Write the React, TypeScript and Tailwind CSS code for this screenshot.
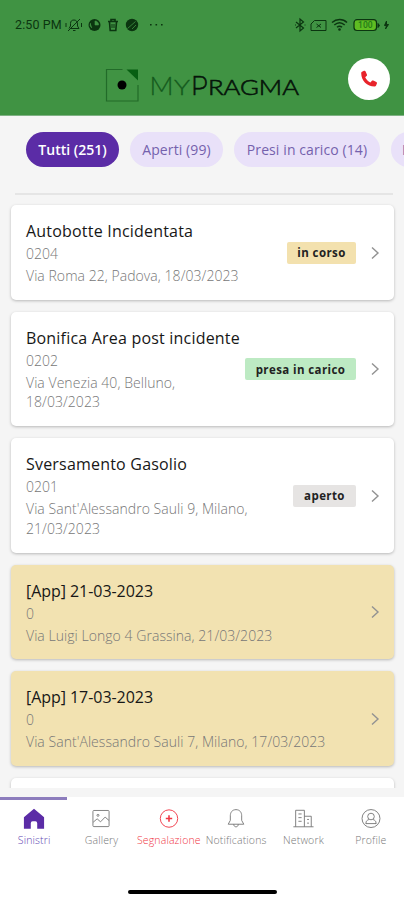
import { useState } from 'react';
import type { ReactNode } from 'react';
import clsx from 'clsx';

type ClaimStatus = 'in corso' | 'presa in carico' | 'aperto';

interface Claim {
  title: string;
  code: string;
  address: string[];
  status?: ClaimStatus;
}

const FILTERS = [
  { label: 'Tutti (251)', size: 'w-[93px]' },
  { label: 'Aperti (99)', size: 'w-[93px]' },
  { label: 'Presi in carico (14)', size: 'w-[146px]' },
  { label: 'I', size: 'w-[110px] pl-[11px] text-left' }
];

const CLAIMS: Claim[] = [
  { title: 'Autobotte Incidentata', code: '0204', address: ['Via Roma 22, Padova, 18/03/2023'], status: 'in corso' },
  { title: 'Bonifica Area post incidente', code: '0202', address: ['Via Venezia 40, Belluno,', '18/03/2023'], status: 'presa in carico' },
  { title: 'Sversamento Gasolio', code: '0201', address: ["Via Sant'Alessandro Sauli 9, Milano,", '21/03/2023'], status: 'aperto' },
  { title: '[App] 21-03-2023', code: '0', address: ['Via Luigi Longo 4 Grassina, 21/03/2023'] },
  { title: '[App] 17-03-2023', code: '0', address: ["Via Sant'Alessandro Sauli 7, Milano, 17/03/2023"] }
];

const STATUS_STYLES: Record<ClaimStatus, string> = {
  'in corso': 'bg-[#f3e1ae] w-[69px]',
  'presa in carico': 'bg-[#bdeac3] w-[111px]',
  aperto: 'bg-[#e6e4e3] w-[63px]'
};

const TABS: { label: string; icon: ReactNode; color: string }[] = [
  {
    label: 'Sinistri',
    color: 'text-[#6248b3]',
    icon: (
      <path d="M1 10.2 12 .8l11 9.4V22.500h-7.500v-6a2 2 0 0 0-2-2h-3a2 2 0 0 0-2 2v6H1z" fill="#5b2ca6" stroke="none" />
    )
  },
  {
    label: 'Gallery',
    color: 'text-[#777]',
    icon: (
      <>
        <rect x="3.2" y="2.7" width="17.6" height="17.6" rx="1" />
        <circle cx="8.7" cy="8" r="1.1" />
        <path d="m3.500 15.500 4.300-3.700 3.700 3.300 5-5.200 4.300 3.800" />
      </>
    )
  },
  {
    label: 'Segnalazione',
    color: 'text-[#f03644]',
    icon: (
      <>
        <circle cx="12" cy="11.500" r="9.500" />
        <path d="M12 8v7M8.500 11.500h7" strokeWidth="1.700" />
      </>
    )
  },
  {
    label: 'Notifications',
    color: 'text-[#777]',
    icon: (
      <path d="M12 1.800c-4 0-6.200 2.800-6.200 6.700v5l-2.300 4.200h17l-2.300-4.200v-5C18.200 4.600 16 1.800 12 1.800ZM9.500 17.700c0 3.800 5 3.800 5 0" />
    )
  },
  {
    label: 'Network',
    color: 'text-[#777]',
    icon: (
      <path d="M1.500 20.500h22M4 20.500V2.500h9.500v18M13.500 9h7.500v11.500M7 6.500h3.500M7 10.500h3.500M7 14.500h3.500M16.500 12.500h2M16.500 16.500h2" />
    )
  },
  {
    label: 'Profile',
    color: 'text-[#777]',
    icon: (
      <>
        <circle cx="12" cy="11.500" r="9.800" />
        <circle cx="12" cy="9.300" r="3.600" />
        <path d="M6.500 17.500v-1c0-2.200 1.300-3.300 3.200-3.900M17.500 17.500v-1c0-2.200-1.300-3.300-3.200-3.900M6.500 17h11" />
      </>
    )
  }
];

function StatusBar() {
  return (
    <div className="flex h-[50px] items-center pl-[15px] pr-3 text-[#0b3510]">
      <span className="w-[50px] whitespace-nowrap font-['Roboto'] text-[12.5px] tracking-[0.1px]">2:50 PM</span>
      <svg width="98" height="16" viewBox="0 0 98 16" fill="none" stroke="currentColor">
        {/* muted bell */}
        <path d="M4 11.500 5.500 9V6.500C5.500 4 7 3 9 3s3.500 1.500 3.500 4v2l1.500 2.500H6M8 13.500h2.500M3 14 15 2M1 6v4M16.500 6v4" />
        <circle cx="29.500" cy="8" r="6" fill="currentColor" stroke="none" />
        <path d="M27 11a4 4 0 0 1-1.500-5M30 4v4h3.500a3.500 3.500 0 0 0-3.500-4Z" stroke="#409343" fill="#409343" strokeWidth=".6" />
        <path d="M43 4.500h10M46 4V2.500h4V4M44.500 5l.7 8.500h5.600l.7-8.500" strokeWidth="1.600" />
        <path d="M47 7v4M49 7v4" />
        <circle cx="67" cy="8" r="6.200" fill="currentColor" stroke="none" />
        <path d="m62.500 11.500 8-7M67 12l4-4" stroke="#409343" strokeWidth=".8" />
        <path d="M85 7.700h1.600M90.500 7.700h1.600M96 7.700h1.600" strokeWidth="1.600" />
      </svg>
      <svg className="ml-auto" width="98" height="16" viewBox="0 0 98 16" fill="none" stroke="currentColor">
        <path d="m2 5 7.500 6L6 14V2l3.500 3L2 11M1 8h1M10.500 8h1" strokeWidth="1.200" />
        <path d="M20.500 3.500h11.500v10h-15V7zM22.500 7l4.500 3.500M27 7l-4.500 3.500" />
        <path d="M38 5.500c4.500-4 11-4 15 0M40.300 8c3.200-2.800 7.300-2.800 10.400 0M43 10.300c1.600-1.400 3.500-1.400 5 0" strokeWidth="1.500" />
        <circle cx="45.500" cy="12.500" r="1.300" fill="currentColor" stroke="none" />
        <rect x="60" y="2.700" width="22.500" height="10.800" rx="3" fill="#5fbd22" strokeWidth="1.200" />
        <path d="M84 6.500v4l1.500-2z" fill="currentColor" />
        <text x="71.300" y="11.200" textAnchor="middle" fontSize="8.500" fontWeight="500" fontFamily="Roboto" fill="#1f7a18" stroke="none">100</text>
        <path d="m92.500 4-2 4.500h2L91.500 12l3-4.500h-2z" fill="currentColor" />
      </svg>
    </div>
  );
}

function Header() {
  return (
    <header className="h-[116px] shrink-0 border-b border-[#7fb184] bg-[#409343]">
      <StatusBar />
      <div className="flex items-start pl-[105px] pt-2">
        <svg className="mt-[10px]" width="196" height="36" viewBox="0 0 196 36">
          <path d="M17.500 1.500H1.500v31.500h31.500V17" fill="none" stroke="#226b29" strokeWidth="1.200" />
          <path d="M21.500 1.500H33v11z" fill="#075f12" />
          <circle cx="17" cy="17" r="4.500" fill="#000" />
          <text y="26.500" fontFamily="Lato" fontWeight="300" fill="#14591d" stroke="#14591d" strokeWidth=".3">
            <tspan x="44.500" fontSize="25.500" textLength="24" lengthAdjust="spacingAndGlyphs">M</tspan>
          </text>
          <text x="69" y="26.500" fontFamily="Lato" fontWeight="300" fontSize="22" fill="#14591d" stroke="#14591d" strokeWidth=".3" textLength="16" lengthAdjust="spacingAndGlyphs">Y</text>
          <text x="86" y="26.500" fontFamily="Montserrat, Lato" fontSize="26" fontWeight="300" fill="#06150a" stroke="#06150a" strokeWidth=".6" textLength="17" lengthAdjust="spacingAndGlyphs">P</text>
          <text x="103" y="26.500" fontFamily="Lato" fontSize="21.500" fontWeight="300" fill="#06150a" stroke="#06150a" strokeWidth=".6" textLength="91" lengthAdjust="spacingAndGlyphs">RAGMA</text>
        </svg>
        <button aria-label="Chiama" className="ml-[47px] flex size-[42px] items-center justify-center rounded-full bg-white">
          <svg width="18" height="18" viewBox="0 0 18 18" fill="#e8232b">
            <path d="M2 1.800 4 .8c.7-.3 1.300 0 1.600.6l1.300 3c.3.700.1 1.200-.4 1.700L5.200 7.200c1 2.300 2.700 4 5.200 5.200l1.300-1.500c.4-.5 1-.6 1.600-.3l3 1.400c.6.300.9.900.6 1.600l-.8 2c-.3.700-.8 1-1.500 1C7 16.500 1.300 10.500 1.200 3.200c0-.6.200-1.100.8-1.400Z" />
          </svg>
        </button>
      </div>
    </header>
  );
}

function ClaimCard({ claim }: { claim: Claim }) {
  return (
    <article
      className={clsx(
        'flex shrink-0 items-center rounded-[5px] pb-[14px] pl-[15px] pr-[13px] pt-[15px] shadow-[0_1px_3px_rgba(0,0,0,0.25)]',
        claim.status ? 'bg-white' : 'bg-[#f2e2b1]'
      )}
    >
      <div className="min-w-0 flex-1 whitespace-nowrap">
        <h2
          className={clsx(
            'text-[16px] leading-[22px] text-[#171717]',
            claim.status ? 'tracking-[0.2px]' : 'tracking-[-0.05px]'
          )}
        >
          {claim.title}
        </h2>
        <p className="mt-[2px] text-[14px] font-light leading-[20px] text-[#777]">{claim.code}</p>
        <div className="mt-[2px] text-[14px] font-light leading-[19.700px] tracking-[0.050px] text-[#777]">
          {claim.address.map(line => (
            <p key={line}>{line}</p>
          ))}
        </div>
      </div>
      {claim.status && (
        <span
          className={clsx(
            'flex h-[22px] shrink-0 items-center justify-center whitespace-nowrap rounded-[2px] text-[11.500px] font-bold tracking-[0.400px] text-[#222]',
            STATUS_STYLES[claim.status]
          )}
        >
          {claim.status}
        </span>
      )}
      <svg className="ml-[14px] shrink-0" width="11" height="14" viewBox="0 0 11 14" fill="none" stroke="#929292" strokeWidth="1.400">
        <path d="m2 1.500 6 5.500-6 5.500" />
      </svg>
    </article>
  );
}

export default function App() {
  const [filter, setFilter] = useState(0);
  const [tab, setTab] = useState(0);

  return (
    <div className="flex h-[900px] w-[404px] flex-col overflow-hidden bg-[#f5f5f5] font-['Open_Sans',sans-serif]">
      <Header />

      {/* Filters */}
      <div className="flex shrink-0 gap-[11px] overflow-hidden pl-[26px] pt-4">
        {FILTERS.map((item, i) => (
          <button
            key={item.label}
            onClick={() => setFilter(i)}
            className={clsx(
              'h-[35px] shrink-0 whitespace-nowrap rounded-full text-[14px]',
              item.size,
              filter === i ? 'bg-[#5b2ca6] font-semibold text-white' : 'bg-[#e9e1f9] tracking-[0.1px] text-[#7561ad]'
            )}
          >
            {item.label}
          </button>
        ))}
      </div>
      <div className="ml-[15px] mr-[11px] mt-[26px] h-[2px] shrink-0 bg-[#e5e5e5]" />

      {/* Claims */}
      <main className="flex h-[593px] shrink-0 flex-col gap-[12px] overflow-hidden pl-[11px] pr-[10px] pt-[10px]">
        {CLAIMS.map(claim => (
          <ClaimCard key={claim.title} claim={claim} />
        ))}
        <div className="h-[95px] shrink-0 rounded-[5px] bg-white shadow-[0_1px_3px_rgba(0,0,0,0.25)]" />
      </main>

      {/* Bottom navigation */}
      <nav className="mt-auto flex h-[103px] shrink-0 flex-col bg-white">
        <div className="grid grid-cols-6">
          {TABS.map((item, i) => (
            <button
              key={item.label}
              onClick={() => setTab(i)}
              className={clsx(
                'flex flex-col items-center border-t-[3px] pl-px pt-[8px]',
                tab === i ? 'border-[#8d7dbd]' : 'border-transparent',
                item.color
              )}
            >
              <svg width="22" height="22" viewBox="0 0 24 24" fill="none" stroke="currentColor" strokeWidth="1">
                {item.icon}
              </svg>
              <span className="mt-[2px] whitespace-nowrap text-[10.500px] font-light leading-[16px] tracking-[0.150px]">{item.label}</span>
            </button>
          ))}
        </div>
        <div className="mx-auto mb-[6px] mt-auto h-[4px] w-[149px] rounded-full bg-black" />
      </nav>
    </div>
  );
}
